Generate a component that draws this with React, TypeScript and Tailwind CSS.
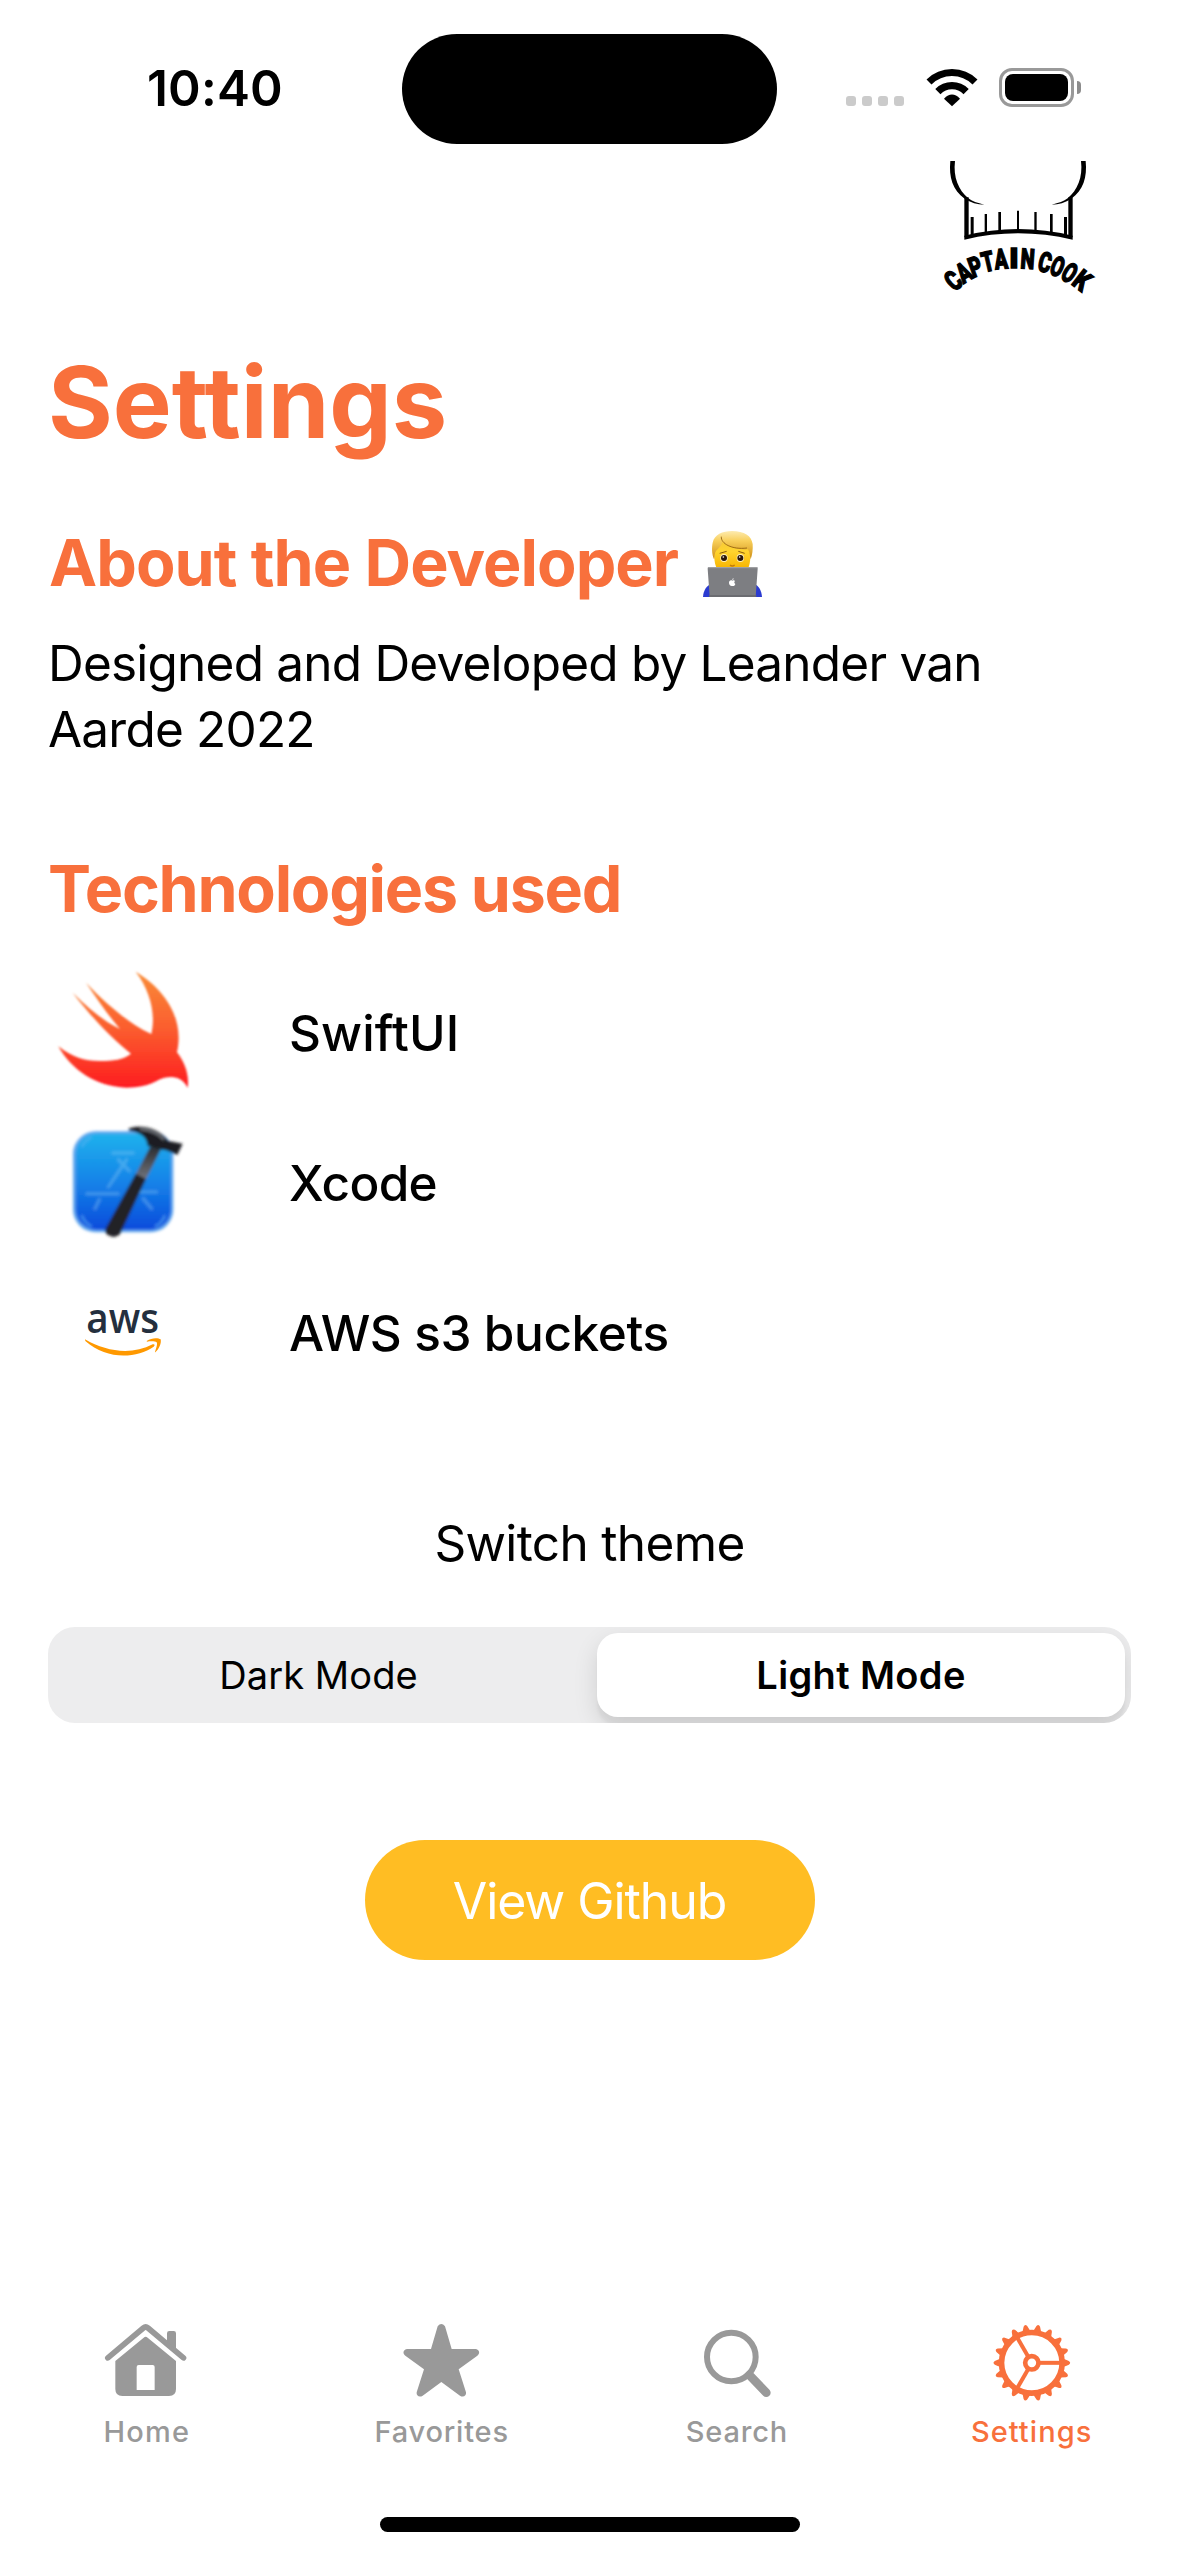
import React from "react";

const ORANGE = "#f8703c";
const GRAY = "#999999";

function StatusBar() {
  return (
    <header className="flex h-[160px] items-start">
      <div className="w-[402px] pl-[147px] pt-[55px] text-[49.5px] font-semibold leading-[66px] tracking-[0.17px]">
        10:40
      </div>
      <div className="mt-[34px] h-[110px] w-[375px] rounded-full bg-black" />
      <div className="ml-[69px] mt-[96px] flex gap-[6px]">
        {[0, 1, 2, 3].map((i) => (
          <span key={i} className="size-[10px] rounded-[3px] bg-[#cbcbcb]" />
        ))}
      </div>
      <svg className="ml-[20px] mt-[66px] h-[42px] w-[56px]" viewBox="431 138 168 126" fill="none">
        <path d="M446 186A97.5 97.5 0 0 1 584 186" stroke="#000" strokeWidth="21" />
        <path d="M472.6 214.6A60 60 0 0 1 557.4 214.6" stroke="#000" strokeWidth="22" />
        <path d="M515 259L491 236Q515 211 539 236Z" fill="#000" />
      </svg>
      <div className="ml-[19px] mt-[68px] h-[39px] w-[75px] rounded-[13px] border-[3px] border-[#999] p-[3px]">
        <div className="h-full rounded-[8px] bg-black" />
      </div>
      <div className="ml-[3px] mt-[81px] h-[13px] w-[4px] rounded-r-full bg-[#8c8c8c]" />
    </header>
  );
}

const LOGO_LETTERS: { c: string; x: number; y: number; r: number; w: number }[] = [
  { c: "C", x: 99, y: 421, r: -41, w: 39 },
  { c: "A", x: 131, y: 397, r: -31, w: 39 },
  { c: "P", x: 166, y: 379, r: -20, w: 38 },
  { c: "T", x: 203, y: 364, r: -13, w: 37 },
  { c: "A", x: 243, y: 357, r: -5, w: 40 },
  { c: "I", x: 282, y: 354, r: 0, w: 28 },
  { c: "N", x: 323, y: 356, r: 4, w: 42 },
  { c: "C", x: 375, y: 366, r: 14, w: 38 },
  { c: "O", x: 413, y: 379, r: 22, w: 38 },
  { c: "O", x: 449, y: 398, r: 32, w: 38 },
  { c: "K", x: 487, y: 421, r: 38, w: 43 },
];

function CaptainCookLogo() {
  return (
    <svg className="h-[150px] w-[160px] overflow-visible" viewBox="60 60 480 450">
      <g fill="#000">
        <path d="M91 63C86 112 98 150 134 176C152 188 172 193 193 194C172 189 156 184 145 175C116 151 99 112 105 63Z" />
        <path d="M497 63C502 112 490 150 454 176C436 188 416 193 395 194C416 189 432 184 443 175C472 151 489 112 483 63Z" />
        <path d="M133 172h13v120h-13zM445 172h13v120h-13z" />
        <path d="M133 299V287Q294 247 458 287V299Q294 261 133 299Z" />
        <path d="M152 231h9v55h-9zM194 222h7v60h-7zM235 216h8v60h-8zM291 212h6v58h-6zM343 216h7v60h-7zM390 222h8v60h-8zM432 231h9v55h-9z" />
      </g>
      {LOGO_LETTERS.map((l, i) => (
        <text
          key={i}
          transform={`translate(${l.x} ${l.y}) rotate(${l.r})`}
          x={-l.w / 2}
          y={30}
          textLength={l.w}
          lengthAdjust="spacingAndGlyphs"
          fontSize="84"
          stroke="#000"
          strokeWidth="4"
          className="font-['Roboto'] font-black"
        >
          {l.c}
        </text>
      ))}
    </svg>
  );
}

function TechnologistEmoji() {
  return (
    <svg className="h-[68px] w-[63px]" viewBox="720 60 189 204">
      <defs>
        <linearGradient id="hair" x1="0" y1="0" x2="0" y2="1">
          <stop offset="0" stopColor="#fdebb0" />
          <stop offset="0.35" stopColor="#f8cf5a" />
          <stop offset="1" stopColor="#cf8f14" />
        </linearGradient>
        <linearGradient id="face" x1="0" y1="0" x2="0" y2="1">
          <stop offset="0" stopColor="#f5c83a" />
          <stop offset="0.4" stopColor="#ffd42e" />
          <stop offset="1" stopColor="#f6b400" />
        </linearGradient>
      </defs>
      <path d="M726 261C727 240 738 225 752 221H878C893 226 902 241 903 261Z" fill="#2b3bd0" />
      <path d="M764 90H864L868 140C868 155 865 166 861 176H768C763 166 760 155 760 140Z" fill="url(#face)" />
      <path d="M759 148C752 132 752 112 755 98C760 74 784 63 813 63C850 63 872 78 875 102C876 118 874 134 869 148C866 138 867 128 861 118C835 120 805 113 785 96C780 112 765 118 762 130C761 138 761 144 759 148Z" fill="url(#hair)" />
      <path d="M781 80C779 100 812 120 858 114" fill="none" stroke="#8f5d0c" strokeWidth="2.5" />
      <ellipse cx="789" cy="144" rx="11" ry="12" fill="#fff3c4" />
      <ellipse cx="838" cy="144" rx="11" ry="12" fill="#fff3c4" />
      <circle cx="789" cy="144" r="9" fill="#2a1708" />
      <circle cx="838" cy="144" r="9" fill="#2a1708" />
      <circle cx="787" cy="141" r="2.5" fill="#fff" />
      <circle cx="836" cy="141" r="2.5" fill="#fff" />
      <path d="M776 130L797 124M832 124L851 130" fill="none" stroke="#8a5a0c" strokeWidth="3" />
      <path d="M807 165Q814 171 821 165" fill="none" stroke="#c27c0a" strokeWidth="4" />
      <path d="M744 171H887Q891 171 890 176L884 261H746L740 176Q739 171 744 171Z" fill="#7d7e82" />
      <path d="M742 173H889" stroke="#a5a6a9" strokeWidth="3" />
      <path d="M744 258H886" stroke="#66676b" strokeWidth="4" />
      <path d="M814 212C809 209 804 212 804 218C804 224 808 229 814 228C819 229 822 226 823 222C819 220 819 215 822 213C820 210 817 210 814 212ZM814 210Q813 206 818 205Q818 210 814 210Z" fill="#fff" />
    </svg>
  );
}

function SwiftIcon() {
  return (
    <svg className="size-[150px]" viewBox="24 -7 450 450">
      <defs>
        <linearGradient id="swift" x1="0" y1="36" x2="0" y2="382" gradientUnits="userSpaceOnUse">
          <stop offset="0" stopColor="#f98c38" />
          <stop offset="0.5" stopColor="#fb5c2e" />
          <stop offset="1" stopColor="#fe1c20" />
        </linearGradient>
        <filter id="soft"><feGaussianBlur stdDeviation="3" /></filter>
      </defs>
      <path
        filter="url(#soft)"
        fill="url(#swift)"
        d="M287 34C362 78 436 165 411 276C432 302 449 342 443 382C428 352 398 342 360 357C325 378 290 382 260 382C170 380 95 330 55 258C100 292 130 302 180 302C220 302 250 298 273 280C215 235 150 165 98 97C150 148 195 185 240 206C205 165 170 115 138 67C190 122 265 190 334 221C348 160 330 90 287 34Z"
      />
    </svg>
  );
}

function XcodeIcon() {
  return (
    <svg className="size-[150px]" viewBox="24 443 450 450">
      <defs>
        <linearGradient id="xcode" x1="0" y1="0" x2="0" y2="1">
          <stop offset="0" stopColor="#1fb1ec" />
          <stop offset="0.5" stopColor="#1483e8" />
          <stop offset="1" stopColor="#0a4bdc" />
        </linearGradient>
        <linearGradient id="shaft" x1="0" y1="0" x2="0" y2="1">
          <stop offset="0" stopColor="#2c2d31" />
          <stop offset="1" stopColor="#74777f" />
        </linearGradient>
        <filter id="softer"><feGaussianBlur stdDeviation="4" /></filter>
      </defs>
      <g filter="url(#softer)">
        <rect x="99" y="513" width="301" height="303" rx="68" fill="#5fa5ee" />
        <rect x="107" y="520" width="286" height="288" rx="62" fill="url(#xcode)" />
        <g fill="none" stroke="#8ccdf8" strokeOpacity="0.38" strokeWidth="9" strokeLinecap="round">
          <path d="M218 578H280M235 598L268 632M260 598L205 680M140 700H235M295 695H350M178 718L165 745M310 715L335 745" />
        </g>
        <path d="M125 560Q135 540 155 530M125 765Q135 790 155 798M375 765Q365 790 345 798" fill="none" stroke="#5db3f5" strokeOpacity="0.6" strokeWidth="7" />
        <path d="M330 560L362 568L316 660L286 645Z" fill="url(#shaft)" />
        <path d="M287 640L318 656L240 822Q222 838 200 822Q192 812 198 802Z" fill="#202126" />
        <path d="M266 505C300 492 352 500 386 542L428 550L412 584L378 570L350 566L322 556C322 530 300 514 266 511Z" fill="#1d1f24" />
        <path d="M300 507Q345 508 372 538" stroke="#74787f" strokeWidth="6" fill="none" />
      </g>
    </svg>
  );
}

function AwsIcon() {
  return (
    <svg className="size-[150px]" viewBox="24 893 450 450">
      <text
        x="139"
        y="1118"
        textLength="218"
        lengthAdjust="spacingAndGlyphs"
        fontSize="126"
        fill="#242f3e"
        className="font-['Open_Sans'] font-semibold"
      >
        aws
      </text>
      <path d="M135 1137C200 1175 275 1185 338 1152C344 1150 346 1155 341 1159C290 1194 200 1200 136 1142Z" fill="#ff9900" />
      <path d="M320 1142C335 1131 355 1132 362 1137C365 1150 356 1168 346 1176C344 1176 345 1174 346 1171C350 1160 353 1150 350 1146C345 1142 330 1143 321 1144Z" fill="#ff9900" />
    </svg>
  );
}

const GEAR_TEETH = Array.from({ length: 18 }, (_, i) => i * 20);

function HomeIcon() {
  return (
    <svg className="h-[90px] w-[98px]" viewBox="114 72 294 270" fill={GRAY}>
      <path d="M143.5 203.5L250 114Q257 108 264 114L370.500 203.5" fill="none" stroke={GRAY} strokeWidth="17" strokeLinecap="round" strokeLinejoin="round" />
      <path d="M321 155V130Q321 123 328 123H341Q348 123 348 130V178Z" />
      <path
        fillRule="evenodd"
        d="M251 143Q257 138 263 143L348 213V297Q348 318 327 318H187Q166 318 166 297V213ZM236 225Q230 225 230 231V300H284V231Q284 225 278 225Z"
      />
    </svg>
  );
}

function StarIcon() {
  return (
    <svg className="h-[90px] w-[98px]" viewBox="999 72 294 270" fill={GRAY}>
      <path d="M1133 109Q1144 95 1155 109L1175 177H1246C1259 178 1261 191 1252 197L1196 238L1218 307C1220 318 1209 323 1200 317L1144 276L1088 317C1079 323 1068 318 1070 307L1092 238L1036 197C1027 191 1029 178 1042 177H1113Z" />
    </svg>
  );
}

function SearchIcon() {
  return (
    <svg className="h-[90px] w-[98px]" viewBox="84 72 294 270" fill="none" stroke={GRAY}>
      <circle cx="214" cy="201" r="73" strokeWidth="18" />
      <path d="M268 255L319 308" strokeWidth="26" strokeLinecap="round" />
    </svg>
  );
}

function GearIcon() {
  return (
    <svg className="h-[90px] w-[98px]" viewBox="968 72 294 270">
      <g transform="translate(1114.5 218.5)">
        <circle r="91" fill="none" stroke={ORANGE} strokeWidth="17" />
        <circle r="20" fill="none" stroke={ORANGE} strokeWidth="14" />
        {[0, 120, 240].map((a) => (
          <path key={a} d="M24 0H88" stroke={ORANGE} strokeWidth="12" transform={`rotate(${a})`} />
        ))}
        {GEAR_TEETH.map((a) => (
          <path key={a} d="M95 -12Q102 -9 111 -5.500Q119 0 111 5.500Q102 9 95 12Z" fill={ORANGE} transform={`rotate(${a})`} />
        ))}
      </g>
    </svg>
  );
}

const TECHNOLOGIES = [
  { name: "SwiftUI", icon: <SwiftIcon />, style: "tracking-[0.12px]" },
  { name: "Xcode", icon: <XcodeIcon />, style: "tracking-[-0.7px]" },
  { name: "AWS s3 buckets", icon: <AwsIcon />, style: "tracking-[-0.4px]" },
];

const TABS = [
  { name: "Home", icon: <HomeIcon />, style: "text-[#999999] tracking-[1.2px] mr-px" },
  { name: "Favorites", icon: <StarIcon />, style: "text-[#999999] tracking-[0.8px] mr-px" },
  { name: "Search", icon: <SearchIcon />, style: "text-[#999999] tracking-[0.82px]" },
  { name: "Settings", icon: <GearIcon />, style: "text-[#f8703c] tracking-[1.05px]" },
];

export default function App() {
  return (
    <div className="flex h-[2556px] w-[1179px] flex-col overflow-hidden bg-white font-['Inter',sans-serif] text-black">
      <StatusBar />
      <div className="flex h-[182px] justify-end pr-[79px]">
        <CaptainCookLogo />
      </div>

      <main className="flex flex-col px-[48px]">
        <h1 className="h-[120px] text-[99px] font-bold leading-[120px] text-[#f8703c]">Settings</h1>

        <div className="mt-[62px] flex h-[78px] items-start">
          <h2 className="whitespace-nowrap pl-px text-[64.5px] font-bold leading-[78px] tracking-[-0.95px] text-[#f8703c]">
            About the Developer
          </h2>
          <div className="ml-[23px] mt-[6px]">
            <TechnologistEmoji />
          </div>
        </div>
        <p className="mt-[28px] whitespace-nowrap text-[49.5px] leading-[66px] tracking-[-0.79px]">
          Designed and Developed by Leander van
          <br />
          Aarde 2022
        </p>

        <h2 className="mt-[88px] whitespace-nowrap text-[64.5px] font-bold leading-[78px] tracking-[-1.27px] text-[#f8703c]">
          Technologies used
        </h2>
        <ul className="mt-[30px] flex flex-col">
          {TECHNOLOGIES.map((t) => (
            <li key={t.name} className="flex h-[150px] items-center">
              {t.icon}
              <span className={`ml-[91px] text-[49.5px] font-medium leading-[66px] ${t.style}`}>{t.name}</span>
            </li>
          ))}
        </ul>

        <p className="mt-[102px] text-center text-[49.5px] leading-[66px] tracking-[-0.65px]">Switch theme</p>

        <div className="mt-[51px] flex h-[96px] overflow-hidden rounded-[27px] bg-[#ededee] p-[6px] text-[38px] leading-[84px]">
          <button className="h-[84px] w-[543px] pr-[14px] text-center tracking-[0.09px]">Dark Mode</button>
          <button className="h-[84px] w-[528px] rounded-[21px] bg-white text-center font-semibold tracking-[0.36px] shadow-[0_9px_24px_rgba(0,0,0,0.12),0_9px_3px_rgba(0,0,0,0.04)]">
            Light Mode
          </button>
        </div>

        <button className="mt-[117px] h-[120px] w-[450px] self-center rounded-full bg-[#ffbd23] pt-[2px] text-[50px] font-normal leading-[118px] tracking-[-1.07px] text-white">
          View Github
        </button>
      </main>

      <nav className="mt-[354px] grid grid-cols-4">
        {TABS.map((t) => (
          <div key={t.name} className="flex flex-col items-center">
            {t.icon}
            <span className={`mt-[10px] text-[29px] font-medium leading-[36px] ${t.style}`}>{t.name}</span>
          </div>
        ))}
      </nav>

      <div className="mt-[67px] h-[15px] w-[420px] self-center rounded-full bg-black" />
    </div>
  );
}
